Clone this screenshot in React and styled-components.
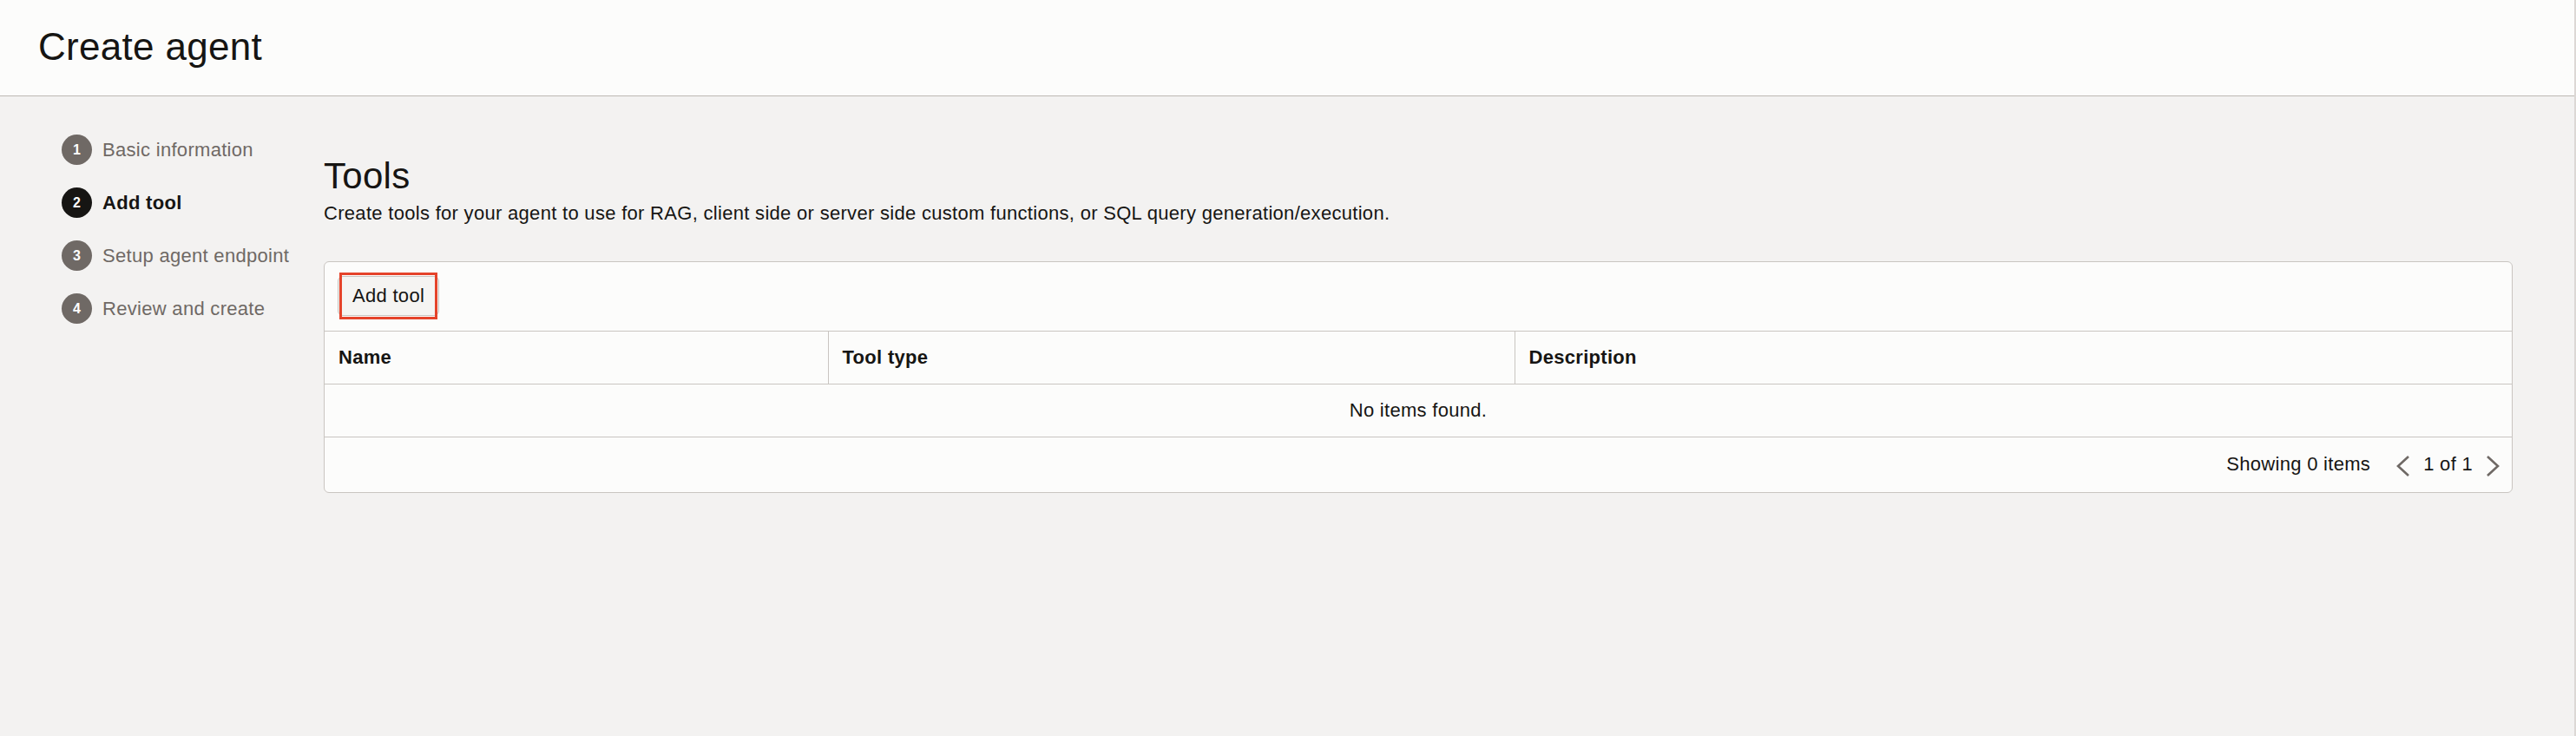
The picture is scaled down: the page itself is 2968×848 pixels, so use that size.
import React from "react";
import styled, { createGlobalStyle } from "styled-components";

const GlobalStyle = createGlobalStyle`
  html, body {
    margin: 0;
    padding: 0;
    background: #f3f2f1;
    font-family: "Liberation Sans", Arial, Helvetica, sans-serif;
    color: #161513;
    letter-spacing: 0.3px;
  }
  * { box-sizing: border-box; }
`;

const Page = styled.div`
  min-height: 100vh;
  background: #f3f2f1;
  border-right: 2px solid #dcd8d5;
  display: flex;
  flex-direction: column;
`;

const Header = styled.header`
  height: 111px;
  background: #fcfcfb;
  border-bottom: 1px solid #bdb8b3;
  display: flex;
  align-items: center;
  padding-left: 44px;
  padding-bottom: 2px;
`;

const PageTitle = styled.h1`
  margin: 0;
  font-size: 44px;
  font-weight: 400;
  line-height: 52px;
  color: #161513;
`;

const Body = styled.div`
  display: flex;
  flex: 1;
`;

const Sidebar = styled.nav`
  width: 373px;
  flex: none;
  padding: 31px 0 0 71px;
  display: flex;
  flex-direction: column;
`;

const Step = styled.div`
  height: 61px;
  display: flex;
  align-items: center;
  gap: 12px;
`;

const StepNumber = styled.span`
  width: 35px;
  height: 35px;
  border-radius: 50%;
  flex: none;
  display: flex;
  align-items: center;
  justify-content: center;
  background: ${(p) => (p.$active ? "#161513" : "#6f6965")};
  color: #ffffff;
  font-size: 16px;
  font-weight: 700;
  letter-spacing: 0;
`;

const StepLabel = styled.span`
  font-size: 22px;
  line-height: 28px;
  color: ${(p) => (p.$active ? "#161513" : "#6f6965")};
  font-weight: ${(p) => (p.$active ? 700 : 400)};
  white-space: nowrap;
`;

const Main = styled.main`
  flex: 1;
  padding: 68px 71px 0 0;
`;

const SectionTitle = styled.h2`
  margin: 0;
  font-size: 42px;
  line-height: 48px;
  font-weight: 400;
  color: #161513;
`;

const SectionText = styled.p`
  margin: 5px 0 0;
  font-size: 22px;
  line-height: 28px;
  color: #161513;
`;

const Panel = styled.section`
  margin-top: 41px;
  background: #fcfcfb;
  border: 1px solid #c9c5c1;
  border-radius: 6px;
`;

const Toolbar = styled.div`
  padding: 16px 15px 17px;
  border-bottom: 1px solid #c9c5c1;
  display: flex;
`;

const ButtonWrap = styled.div`
  position: relative;
  display: inline-flex;
`;

const Button = styled.button`
  height: 46px;
  padding: 0 16px;
  background: #f5f4f2;
  border: 1px solid #c9c5c1;
  border-radius: 6px;
  font-family: inherit;
  font-size: 22px;
  letter-spacing: 0.3px;
  color: #161513;
  cursor: pointer;
`;

const FocusMark = styled.span`
  position: absolute;
  top: -4px;
  left: 2px;
  right: 2px;
  bottom: -4px;
  border: 3px solid #e5432a;
  pointer-events: none;
`;

const Table = styled.table`
  width: 100%;
  border-collapse: collapse;
  table-layout: fixed;
`;

const Th = styled.th`
  height: 60px;
  padding: 0 16px;
  text-align: left;
  font-size: 22px;
  font-weight: 700;
  color: #161513;
  border-bottom: 1px solid #c9c5c1;
  border-left: ${(p) => (p.$first ? "none" : "1px solid #c9c5c1")};
  width: ${(p) => p.$w || "auto"};
`;

const EmptyCell = styled.td`
  height: 61px;
  text-align: center;
  font-size: 22px;
  color: #161513;
  border-bottom: 1px solid #c9c5c1;
`;

const Footer = styled.div`
  height: 63px;
  display: flex;
  align-items: center;
  justify-content: flex-end;
  padding: 0 14px 0 0;
  font-size: 22px;
  color: #161513;
`;

const Pager = styled.div`
  display: flex;
  align-items: center;
  margin-left: 30px;
  gap: 15px;
`;

const PagerButton = styled.span`
  display: flex;
  align-items: center;
  justify-content: center;
  width: 16px;
  height: 24px;
  margin-top: 3px;
`;

const Chevron = ({ dir }) => (
  <svg width="16" height="24" viewBox="0 0 16 24" fill="none">
    <polyline
      points={dir === "left" ? "14,1 2,12 14,23" : "2,1 14,12 2,23"}
      stroke="#6f6965"
      strokeWidth="2.6"
      strokeLinejoin="miter"
    />
  </svg>
);

const steps = [
  { n: 1, label: "Basic information" },
  { n: 2, label: "Add tool", active: true },
  { n: 3, label: "Setup agent endpoint" },
  { n: 4, label: "Review and create" },
];

export default function App() {
  return (
    <>
      <GlobalStyle />
      <Page>
        <Header>
          <PageTitle>Create agent</PageTitle>
        </Header>
        <Body>
          <Sidebar>
            {steps.map((s) => (
              <Step key={s.n}>
                <StepNumber $active={s.active}>{s.n}</StepNumber>
                <StepLabel $active={s.active}>{s.label}</StepLabel>
              </Step>
            ))}
          </Sidebar>
          <Main>
            <SectionTitle>Tools</SectionTitle>
            <SectionText>
              Create tools for your agent to use for RAG, client side or server side custom
              functions, or SQL query generation/execution.
            </SectionText>
            <Panel>
              <Toolbar>
                <ButtonWrap>
                  <Button>Add tool</Button>
                  <FocusMark />
                </ButtonWrap>
              </Toolbar>
              <Table>
                <thead>
                  <tr>
                    <Th $first $w="580px">Name</Th>
                    <Th $w="791px">Tool type</Th>
                    <Th>Description</Th>
                  </tr>
                </thead>
                <tbody>
                  <tr>
                    <EmptyCell colSpan={3}>No items found.</EmptyCell>
                  </tr>
                </tbody>
              </Table>
              <Footer>
                <span>Showing 0 items</span>
                <Pager>
                  <PagerButton>
                    <Chevron dir="left" />
                  </PagerButton>
                  <span>1 of 1</span>
                  <PagerButton>
                    <Chevron dir="right" />
                  </PagerButton>
                </Pager>
              </Footer>
            </Panel>
          </Main>
        </Body>
      </Page>
    </>
  );
}
